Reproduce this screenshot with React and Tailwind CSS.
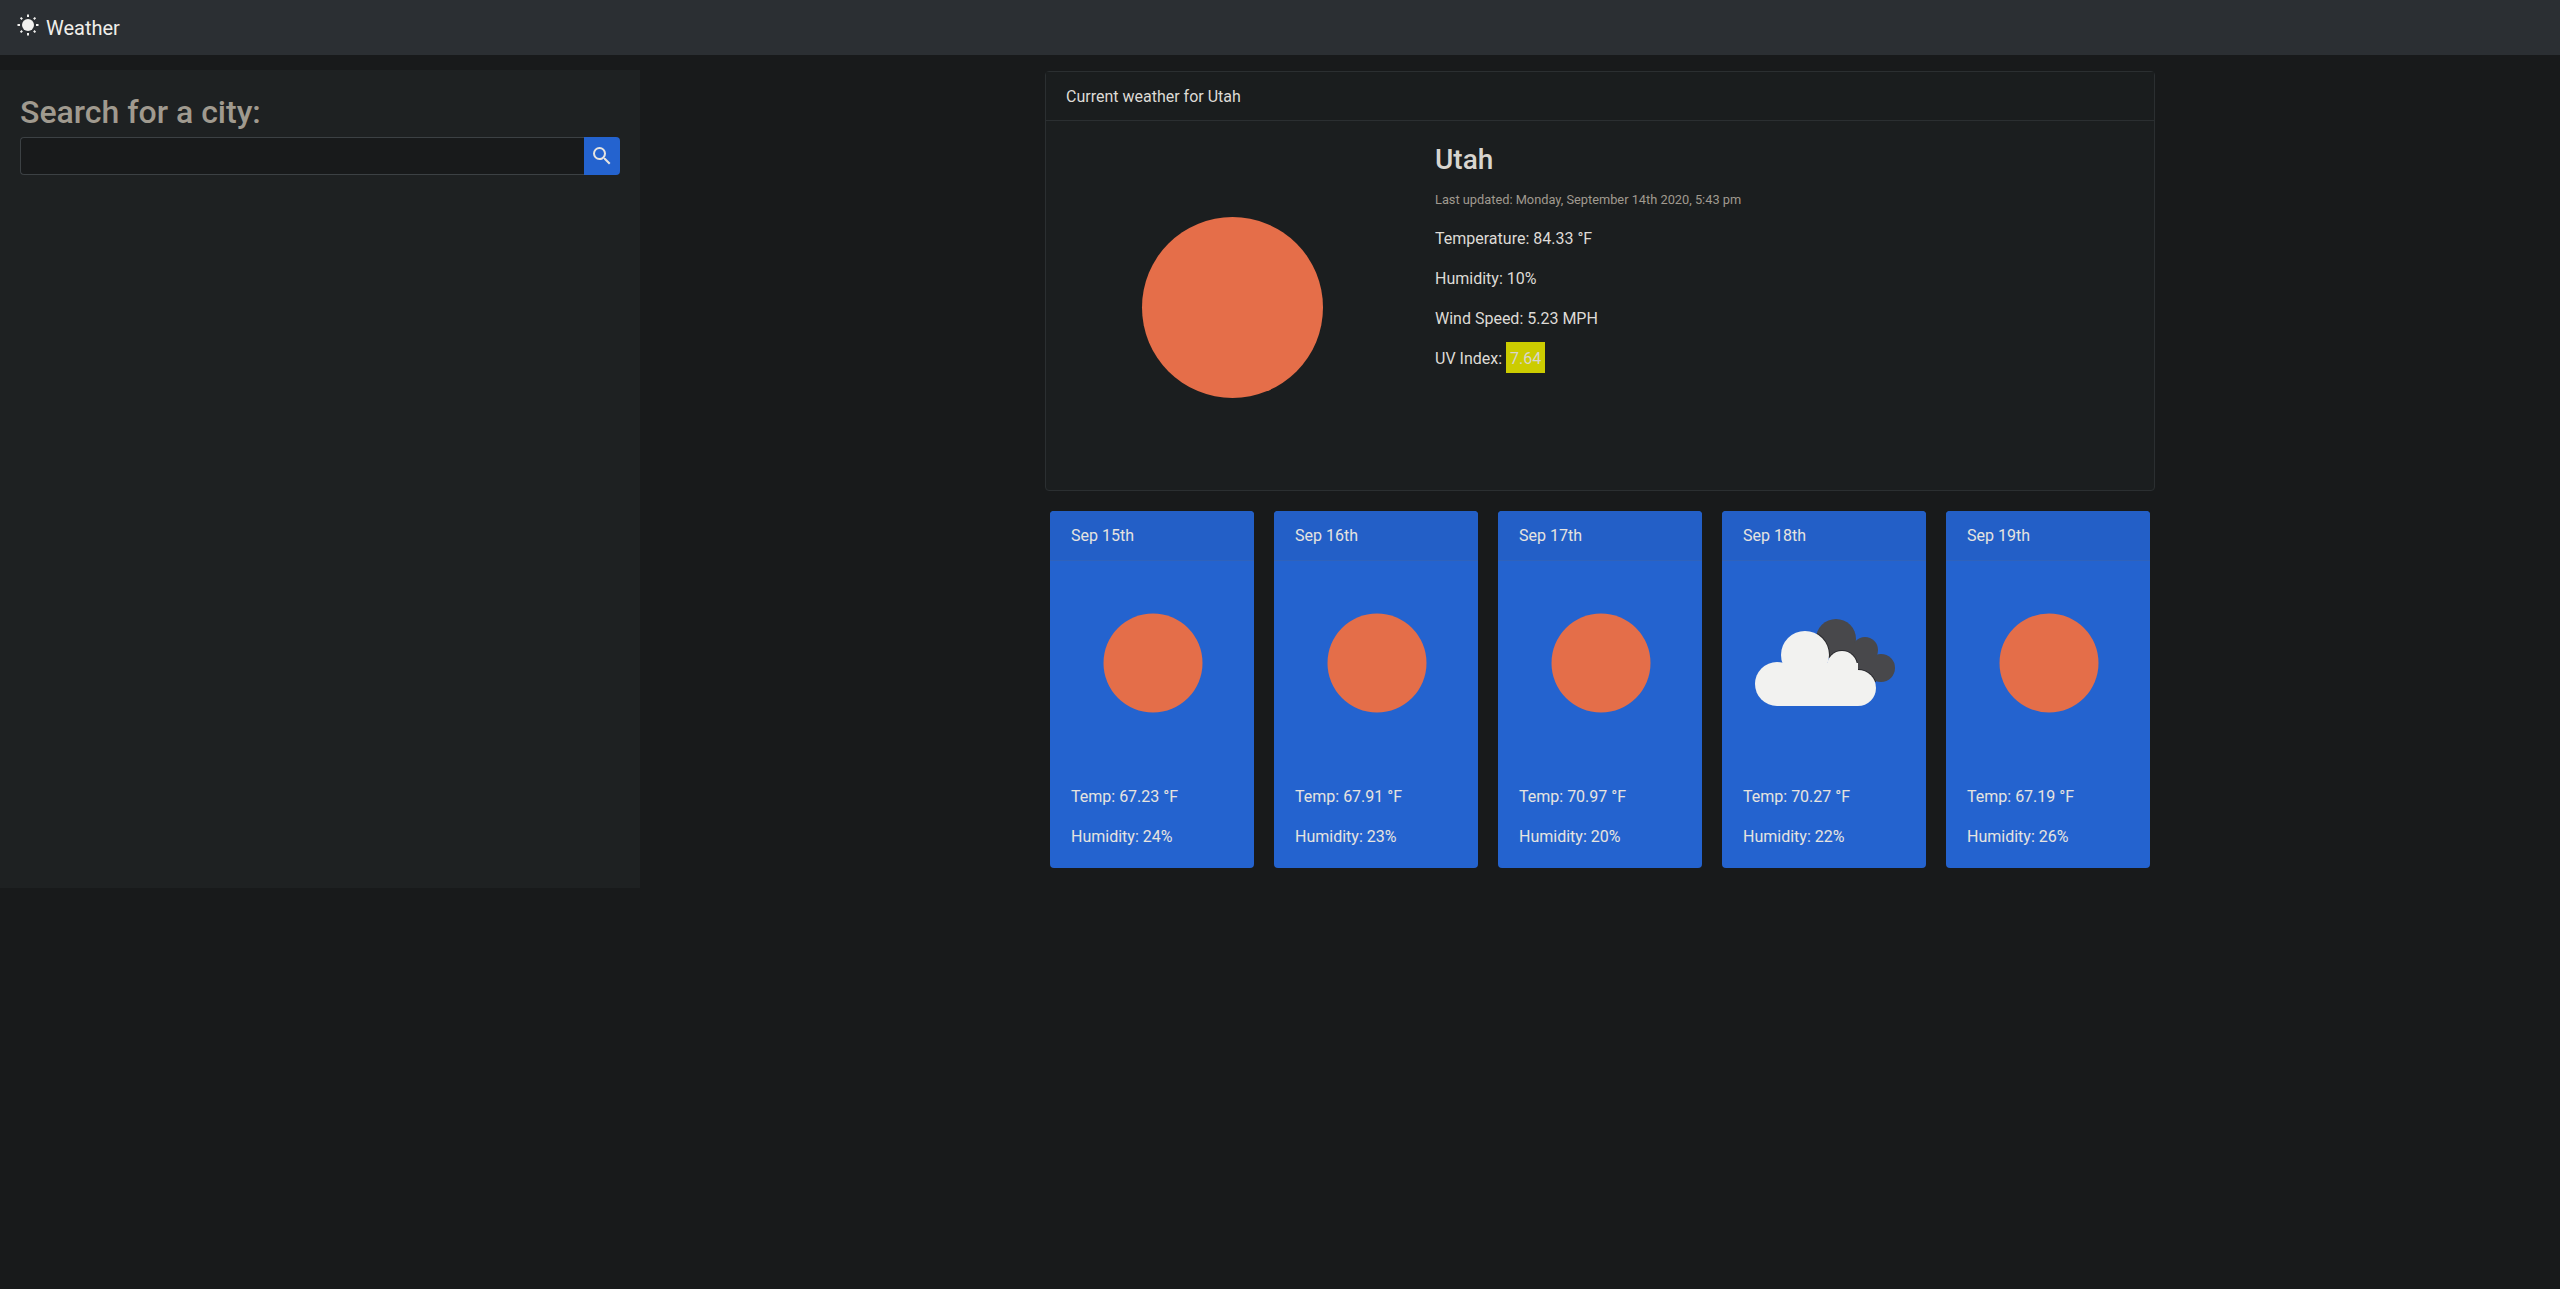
import { MdSearch } from "react-icons/md";

const forecast = [
  { date: "Sep 15th", temp: "67.23", humidity: "24", icon: "sun" },
  { date: "Sep 16th", temp: "67.91", humidity: "23", icon: "sun" },
  { date: "Sep 17th", temp: "70.97", humidity: "20", icon: "sun" },
  { date: "Sep 18th", temp: "70.27", humidity: "22", icon: "cloud" },
  { date: "Sep 19th", temp: "67.19", humidity: "26", icon: "sun" },
];

const LogoSun = () => (
  <svg width="26" height="26" viewBox="0 0 26 26" className="shrink-0 mt-[-6px]">
    <circle cx="13" cy="13" r="6" fill="#f0f0ee" />
    <g stroke="#f0f0ee" strokeWidth="2" strokeLinecap="butt">
      <path d="M13 2.5v2.5M13 21v2.5M2.5 13H5M21 13h2.5" />
      <path d="M5.6 5.6l1.6 1.6M18.8 18.8l1.6 1.6M5.6 20.4l1.6-1.6M18.8 7.2l1.6-1.6" />
    </g>
  </svg>
);

const WeatherIcon = ({ type }) => (
  <svg width="160" height="160" viewBox="0 0 160 160">
    {type === "sun" ? (
      <circle cx="80" cy="80" r="49.5" fill="#e46e49" />
    ) : (
      <>
        <defs>
          <clipPath id="darkCloud">
            <circle cx="91" cy="56" r="20" />
            <circle cx="120" cy="67" r="13" />
            <circle cx="136" cy="85" r="14" />
            <rect x="91" y="60" width="40" height="39" />
          </clipPath>
        </defs>
        <g fill="#48484b">
          <circle cx="91" cy="56" r="20" />
          <circle cx="120" cy="67" r="13" />
          <circle cx="136" cy="85" r="14" />
          <rect x="91" y="60" width="40" height="39" />
        </g>
        <g fill="#2a2a2e" clipPath="url(#darkCloud)">
          <circle cx="60" cy="72" r="25" />
          <circle cx="97" cy="83" r="16" />
          <circle cx="113" cy="105" r="19" />
        </g>
        <g fill="#f2f2f0">
          <circle cx="60" cy="72" r="24" />
          <circle cx="32" cy="101" r="22" />
          <circle cx="97" cy="83" r="15" />
          <circle cx="113" cy="105" r="18" />
          <rect x="32" y="80" width="81" height="43" />
        </g>
      </>
    )}
  </svg>
);

const ForecastCard = ({ day }) => (
  <div className="w-[204px] h-[357px] flex flex-col rounded-[4px] bg-[#2463cf] text-[#e6e4e0]">
    <div className="h-[50px] shrink-0 pl-[21px] pt-[13px] leading-6 border-b border-[#2f62bb] bg-[#235fc7] rounded-t-[4px]">
      {day.date}
    </div>
    <div className="ml-[23px] pt-[22px]">
      <WeatherIcon type={day.icon} />
    </div>
    <div className="mt-auto pl-[21px] pb-[19px]">
      <p className="mb-[16px] leading-6">Temp: {day.temp} °F</p>
      <p className="leading-6">Humidity: {day.humidity}%</p>
    </div>
  </div>
);

export default function App() {
  return (
    <div
      className="min-h-screen bg-[#181a1b] text-[16px] text-[#dedbd6]"
      style={{ fontFamily: 'Roboto, "Noto Sans", sans-serif' }}
    >
      <nav className="h-[55px] bg-[#2b2f33] flex items-center pl-[15px] gap-[5px]">
        <LogoSun />
        <span className="text-[20px] text-[#f0eeea]">Weather</span>
      </nav>

      <main className="flex items-start">
        <aside className="w-1/4 h-[818px] mt-[15px] bg-[#1e2122] p-[20px]">
          <h2 className="text-[32px] leading-[38px] font-medium text-[#a09a8f] pt-[3px] mb-[6px]">Search for a city:</h2>
          <div className="flex h-[38px]">
            <input className="flex-1 min-w-0 bg-[#181a1b] border border-[#3c4144] border-r-0 rounded-l-[4px] outline-none" />
            <button className="w-[36px] flex items-center justify-center bg-[#2463cf] rounded-r-[4px] text-[#e6e4e0]">
              <MdSearch size={24} />
            </button>
          </div>
        </aside>

        <section className="flex-1">
          <div className="w-[1140px] mx-auto px-[15px] pt-[16px]">
            <div className="h-[420px] bg-[#1b1e1f] border border-[#2b2f31] rounded-[4px]">
              <div className="h-[49px] border-b border-[#2b2f31] pl-[20px] pt-[13px] leading-6 bg-[#1a1d1e]">
                Current weather for Utah
              </div>
              <div className="flex h-[368px]">
                <div className="w-[373px] flex items-center justify-center pt-[5px]">
                  <div className="w-[181px] h-[181px] rounded-full bg-[#e56e49]" />
                </div>
                <div className="pl-[16px] pt-[22px]">
                  <h3 className="text-[28px] leading-[34px] font-medium mb-[13px] text-[#d8d5cf]">Utah</h3>
                  <p className="text-[12.8px] leading-[19px] mb-[18px] text-[#a09a8f]">
                    Last updated: Monday, September 14th 2020, 5:43 pm
                  </p>
                  <p className="leading-6 mb-4">Temperature: 84.33 °F</p>
                  <p className="leading-6 mb-4">Humidity: 10%</p>
                  <p className="leading-6 mb-4">Wind Speed: 5.23 MPH</p>
                  <p className="leading-6 mb-4">
                    UV Index:{" "}
                    <span className="inline-block px-[4px] pt-[5px] pb-[2px] mt-[-5px] mb-[-2px] leading-6 bg-[#cccc00] text-[#d8d5cf]">7.64</span>
                  </p>
                </div>
              </div>
            </div>

            <div className="flex gap-[20px] mt-[20px] px-[5px]">
              {forecast.map((day) => (
                <ForecastCard key={day.date} day={day} />
              ))}
            </div>
          </div>
        </section>
      </main>
    </div>
  );
}
